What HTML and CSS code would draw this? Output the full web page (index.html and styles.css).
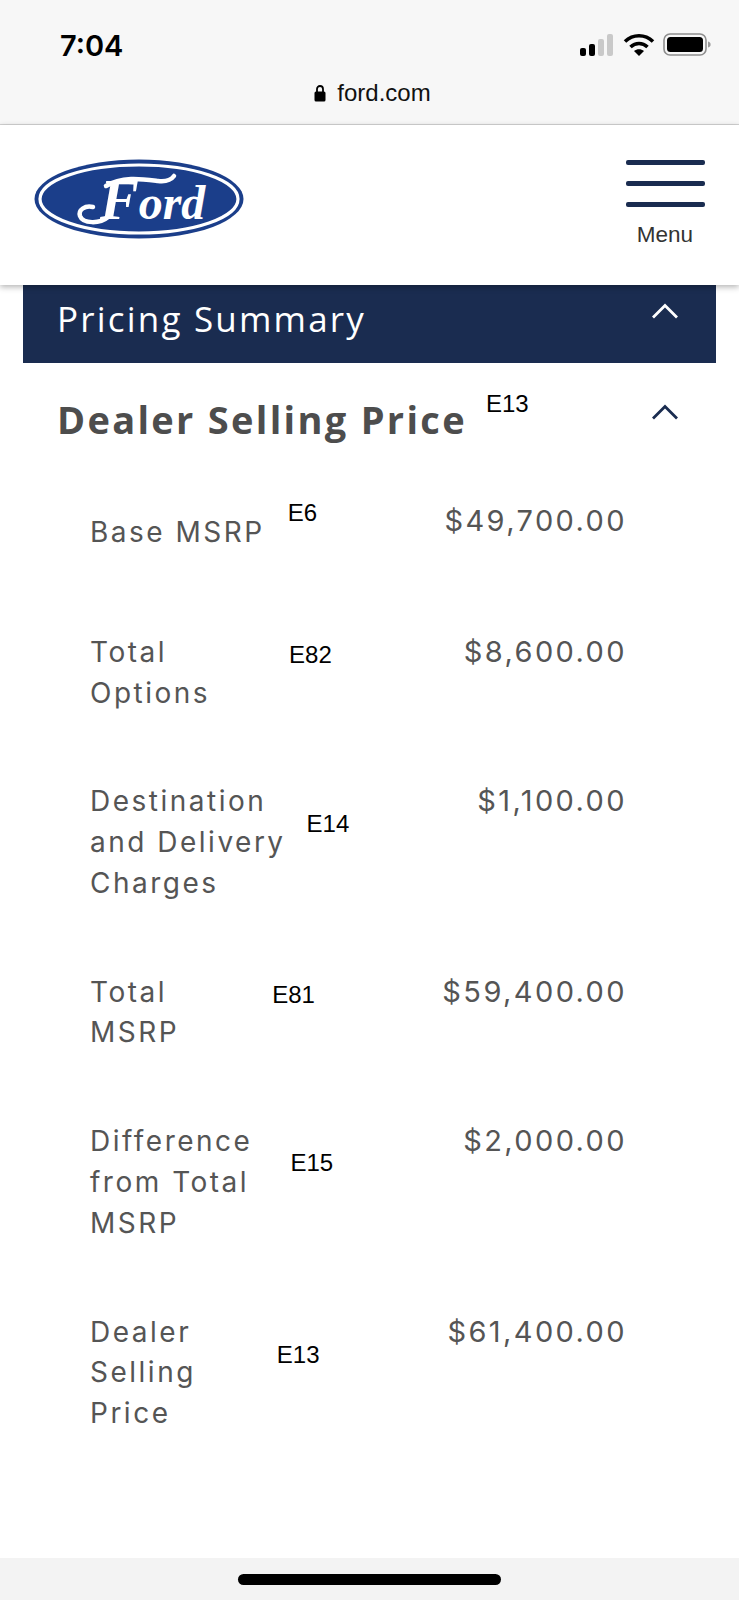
FILE: index.html
```html
<!DOCTYPE html>
<html lang="en">
	<head>
		<meta charset="UTF-8" />
		<meta name="viewport" content="width=device-width, initial-scale=1.0" />
		<title>Ford - Pricing Summary</title>
		<link rel="stylesheet" href="styles.css">
	</head>

	<body>
		<div class="browser-bar">
			<div class="status-row">
				<span class="time">7:04</span>
				<div class="status-icons">
					<svg width="36" height="24" viewBox="0 0 36 24">
						<rect x="1" y="15" width="6" height="8" rx="2" fill="#000" />
						<rect x="10" y="11" width="6" height="12" rx="2" fill="#000" />
						<rect x="19" y="6" width="6" height="17" rx="2" fill="#c9c9c9" />
						<rect x="28" y="1" width="6" height="22" rx="2" fill="#c9c9c9" />
					</svg>
					<svg width="32" height="24" viewBox="0 0 32 24" fill="none" stroke="#000" stroke-width="3.6">
						<path d="M2 8.5c8-7.6 20-7.6 28 0" />
						<path d="M7.5 14c5-4.6 12-4.6 17 0" />
						<path d="M16 23l-5-5c3-2.2 7-2.2 10 0z" fill="#000" stroke="none" />
					</svg>
					<svg width="48" height="24" viewBox="0 0 48 24">
						<rect x="1" y="1" width="42" height="21" rx="6" fill="none" stroke="#8e8e8e" stroke-width="1.6" />
						<rect x="4" y="4" width="36" height="15" rx="3.5" fill="#000" />
						<path d="M45 8.5c2 .6 2.6 1.6 2.6 3s-.6 2.4-2.6 3z" fill="#9a9a9a" />
					</svg>
				</div>
			</div>
			<div class="address">
				<svg width="12" height="18" viewBox="0 0 12 18">
					<path d="M3 8V5a3 3 0 0 1 6 0v3" fill="none" stroke="#000" stroke-width="1.8" />
					<rect x="0.5" y="7.5" width="11" height="10" rx="1.5" fill="#000" />
				</svg>
				<span>ford.com</span>
			</div>
		</div>

		<header class="site-header">
			<svg class="logo" width="210" height="80" viewBox="0 0 210 80">
				<ellipse cx="105" cy="40" rx="104.5" ry="39.500" fill="#1b3e8a" />
				<ellipse cx="105" cy="40" rx="99" ry="34" fill="none" stroke="#fff" stroke-width="3.2" />
				<!-- les paraphes du F, les lettres restent du vrai texte -->
				<path class="logo-swash" d="M72 27c16-10 36-7 52-5 8 1 13-1 16-5" />
				<path class="logo-swash" d="M74 58c-8 7-25 7-28-1-2-6 5-11 13-9" />
				<text class="logo-text" x="66" y="60"><tspan class="logo-cap">F</tspan>ord</text>
			</svg>
			<button class="menu-btn">
				<span class="menu-line"></span>
				<span class="menu-line"></span>
				<span class="menu-line"></span>
				<span class="menu-label">Menu</span>
			</button>
		</header>

		<main class="content">
			<div class="summary-bar">
				<h2>Pricing Summary</h2>
				<svg width="28" height="16" viewBox="0 0 28 16" fill="none" stroke="#fff" stroke-width="2.8">
					<path d="M2 14.500L14 2.500l12 12" />
				</svg>
			</div>

			<div class="price-head">
				<h3>Dealer Selling Price</h3>
				<span class="note note-head">E13</span>
				<svg width="28" height="16" viewBox="0 0 28 16" fill="none" stroke="#1a2c50" stroke-width="2.8">
					<path d="M2 14.500L14 2.500l12 12" />
				</svg>
			</div>

			<div class="rows">
				<div class="row">
					<span class="label label-low">Base MSRP</span>
					<span class="note note-e6">E6</span>
					<span class="price">$49,700.00</span>
				</div>
				<div class="row">
					<span class="label">Total<br>Options</span>
					<span class="note note-e82">E82</span>
					<span class="price">$8,600.00</span>
				</div>
				<div class="row">
					<span class="label">Destination<br>and Delivery<br>Charges</span>
					<span class="note note-e14">E14</span>
					<span class="price">$1,100.00</span>
				</div>
				<div class="row">
					<span class="label">Total<br>MSRP</span>
					<span class="note note-e81">E81</span>
					<span class="price">$59,400.00</span>
				</div>
				<div class="row">
					<span class="label">Difference<br>from Total<br>MSRP</span>
					<span class="note note-e15">E15</span>
					<span class="price">$2,000.00</span>
				</div>
				<div class="row">
					<span class="label">Dealer<br>Selling<br>Price</span>
					<span class="note note-e13">E13</span>
					<span class="price">$61,400.00</span>
				</div>
			</div>
		</main>

		<div class="home-bar">
			<span class="home-pill"></span>
		</div>
	</body>
</html>
```

FILE: styles.css
```css
html,
body {
	margin: 0;
	padding: 0;
}
body {
	width: 739px;
	height: 1600px;
	display: flex;
	flex-direction: column;
	background-color: #fff;
	font-family: "Open Sans", sans-serif;
	overflow: hidden;
}

/* barre du navigateur */
.browser-bar {
	height: 125px;
	box-sizing: border-box;
	padding: 28px 28px 0 60px;
	background-color: #f7f7f7;
	border-bottom: 1px solid #d4d4d4;
	flex-shrink: 0;
}
.status-row {
	display: flex;
	justify-content: space-between;
	align-items: center;
	height: 34px;
}
.time {
	font-family: Inter, sans-serif;
	font-size: 29px;
	font-weight: 600;
	color: #000;
}
.status-icons {
	display: flex;
	align-items: center;
	gap: 8px;
}
.address {
	display: flex;
	justify-content: center;
	align-items: center;
	gap: 11px;
	margin: 17px 0 0 -26px;
	font-family: "Liberation Sans", sans-serif;
	font-size: 24px;
	color: #111;
}

/* entete du site */
.site-header {
	position: relative;
	z-index: 1;
	height: 160px;
	box-sizing: border-box;
	display: flex;
	justify-content: space-between;
	align-items: flex-start;
	padding: 34px 34px 0 34px;
	background-color: #fff;
	box-shadow: 0 2px 6px rgba(0, 0, 0, 0.3);
	flex-shrink: 0;
}
.logo-text {
	font-family: "Liberation Serif", serif;
	font-size: 48px;
	font-style: italic;
	font-weight: 700;
	fill: #fff;
}
.logo-cap {
	font-size: 58px;
}
.logo-swash {
	fill: none;
	stroke: #fff;
	stroke-width: 4.500;
	stroke-linecap: round;
}
.menu-btn {
	display: flex;
	flex-direction: column;
	align-items: center;
	width: 80px;
	margin-top: 1px;
	padding: 0;
	background: none;
	border: 0;
	font-family: "Liberation Sans", sans-serif;
}
.menu-line {
	width: 79px;
	height: 5px;
	margin-bottom: 16px;
	background-color: #1a2c50;
	border-radius: 2px;
}
.menu-label {
	margin-top: -1px;
	font-size: 22.500px;
	color: #333;
}

/* contenu */
.content {
	flex: 1;
}
.summary-bar {
	display: flex;
	justify-content: space-between;
	height: 78px;
	margin: 0 23px;
	padding: 0 24px 0 34px;
	background-color: #1a2c50;
	color: #fff;
}
.summary-bar h2 {
	margin: 0;
	font-size: 35px;
	font-weight: 400;
	line-height: 68px;
	letter-spacing: 2.200px;
}
.summary-bar svg {
	margin: 18px 13px 0 0;
}
.price-head {
	display: flex;
	height: 138px;
	padding: 0 60px 0 57px;
}
.price-head h3 {
	margin: 31px 0 0;
	font-size: 38px;
	font-weight: 700;
	line-height: 50px;
	letter-spacing: 2.300px;
	color: #4d4d4d;
}
.price-head svg {
	margin: 41px 0 0 auto;
}
.note {
	font-family: "Liberation Sans", sans-serif;
	font-size: 24px;
	line-height: 28px;
	letter-spacing: 0;
	color: #000;
}
.note-head {
	margin: 27px 0 0 19px;
}
.rows {
	display: flex;
	flex-direction: column;
	gap: 68.200px;
	padding: 0 112px 0 90px;
}
.row {
	display: flex;
	align-items: flex-start;
	color: #555;
	font-family: Inter, sans-serif;
	font-size: 28px;
	line-height: 40.700px;
	letter-spacing: 2.500px;
}
.label {
	flex-shrink: 0;
}
.label-low {
	margin: 11px 0 11px;
}
.price {
	margin-left: auto;
	font-size: 29px;
	letter-spacing: 2.400px;
}
.note-e6 {
	margin: -2px 0 0 23px;
}
.note-e82 {
	margin: 9px 0 0 79px;
}
.note-e14 {
	margin: 29px 0 0 21px;
}
.note-e81 {
	margin: 9px 0 0 93px;
}
.note-e15 {
	margin: 28px 0 0 38px;
}
.note-e13 {
	margin: 29px 0 0 81px;
}

/* barre du bas */
.home-bar {
	display: flex;
	justify-content: center;
	align-items: flex-start;
	height: 42px;
	padding-top: 16px;
	box-sizing: border-box;
	background-color: #f3f3f3;
	flex-shrink: 0;
}
.home-pill {
	width: 263px;
	height: 11px;
	background-color: #000;
	border-radius: 6px;
}
```
